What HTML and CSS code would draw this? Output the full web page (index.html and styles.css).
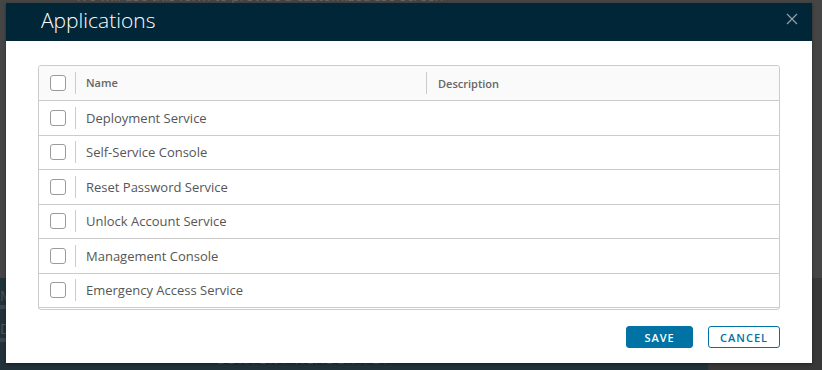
FILE: index.html
```html
<!DOCTYPE html>
<html lang="en">
<head>
    <meta charset="UTF-8">
    <meta name="viewport" content="width=device-width, initial-scale=1.0">
    <title>Applications</title>
    <link rel="stylesheet" href="styles.css">
</head>
<body>
    <div class="page">
        <div class="page-top">
            <p class="page-intro">We will use this form to provide a customized sso screen</p>
        </div>
        <div class="page-bottom">
            <div class="page-nav">
                <div class="nav-item">M</div>
                <div class="nav-item">D</div>
                <div class="content-title">Content Header Top</div>
            </div>
            <div class="page-side"></div>
        </div>
    </div>

    <div class="modal">
        <div class="modal-header">
            <h3 class="modal-title">Applications</h3>
            <button class="close" aria-label="Close">
                <svg width="12" height="12" viewBox="0 0 12 12">
                    <path d="M1 1 L11 11 M11 1 L1 11" stroke="#8b9aa4" stroke-width="1.4" fill="none"/>
                </svg>
            </button>
        </div>

        <div class="modal-body">
            <div class="grid">
                <div class="grid-row grid-head">
                    <div class="cell-select"><span class="checkbox"></span></div>
                    <div class="cell-name">Name</div>
                    <div class="cell-desc">Description</div>
                </div>
                <div class="grid-row">
                    <div class="cell-select"><span class="checkbox"></span></div>
                    <div class="cell-name">Deployment Service</div>
                    <div class="cell-desc"></div>
                </div>
                <div class="grid-row">
                    <div class="cell-select"><span class="checkbox"></span></div>
                    <div class="cell-name">Self-Service Console</div>
                    <div class="cell-desc"></div>
                </div>
                <div class="grid-row">
                    <div class="cell-select"><span class="checkbox"></span></div>
                    <div class="cell-name">Reset Password Service</div>
                    <div class="cell-desc"></div>
                </div>
                <div class="grid-row">
                    <div class="cell-select"><span class="checkbox"></span></div>
                    <div class="cell-name">Unlock Account Service</div>
                    <div class="cell-desc"></div>
                </div>
                <div class="grid-row">
                    <div class="cell-select"><span class="checkbox"></span></div>
                    <div class="cell-name">Management Console</div>
                    <div class="cell-desc"></div>
                </div>
                <div class="grid-row">
                    <div class="cell-select"><span class="checkbox"></span></div>
                    <div class="cell-name">Emergency Access Service</div>
                    <div class="cell-desc"></div>
                </div>
            </div>
        </div>

        <div class="modal-footer">
            <button class="btn btn-primary">Save</button>
            <button class="btn btn-outline">Cancel</button>
        </div>
    </div>
</body>
</html>
```

FILE: styles.css
```css
* {
    box-sizing: border-box;
}
body {
    margin: 0;
    font-family: "Open Sans", sans-serif;
    background: #3c3c3c;
    overflow: hidden;
}

/* dimmed page behind the modal */
.page {
    height: 100vh;
    display: flex;
    flex-direction: column;
}
.page-top {
    height: 278px;
    background: #454545;
    overflow: hidden;
}
.page-intro {
    margin: -11px 0 0 75px;
    font-size: 14px;
    line-height: 14px;
    color: #666;
}
.page-bottom {
    flex: 1;
    display: flex;
}
.page-nav {
    width: 708px;
    background: #22323a;
    padding-top: 4px;
}
.nav-item {
    height: 27px;
    line-height: 27px;
    border-bottom: 4px solid #3a464b;
    margin-bottom: 6px;
    font-size: 14px;
    color: #47555b;
}
.content-title {
    margin: 8px 0 0 216px;
    font-size: 13px;
    line-height: 18px;
    letter-spacing: 2px;
    text-transform: uppercase;
    color: #4b5a60;
}
.page-side {
    flex: 1;
    background: #383838;
}

/* modal */
.modal {
    position: absolute;
    top: 3px;
    left: 6px;
    width: 806px;
    height: 360px;
    background: #fff;
    display: flex;
    flex-direction: column;
    box-shadow: 0 1px 3px rgba(0,0,0,0.4);
}
.modal-header {
    height: 38px;
    background: #012638;
    display: flex;
    justify-content: space-between;
    align-items: flex-start;
    padding: 0 14px 0 35px;
}
.modal-title {
    margin: 0;
    font-size: 21px;
    font-weight: 300;
    line-height: 34px;
    color: #fff;
}
.close {
    background: none;
    border: none;
    padding: 0;
    margin-top: 10px;
    width: 12px;
    height: 12px;
    cursor: pointer;
}
.close svg {
    display: block;
}
.modal-body {
    padding: 24px 32px 0;
}

/* datagrid */
.grid {
    border: 1px solid #ccc;
    border-radius: 3px;
    padding-bottom: 1px;
}
.grid-row {
    display: flex;
    align-items: center;
    height: 34.5px;
    border-bottom: 1px solid #ccc;
    font-size: 13px;
    color: #565656;
}
.grid-head {
    height: 35px;
    background: #fafafa;
    border-radius: 3px 3px 0 0;
    font-size: 11px;
    font-weight: 600;
    color: #666;
}
.cell-select {
    width: 37px;
    height: 22px;
    padding-left: 11px;
    display: flex;
    align-items: center;
    border-right: 1px solid #ccc;
}
.checkbox {
    width: 16px;
    height: 16px;
    border: 1px solid #9a9a9a;
    border-radius: 3px;
    background: #fff;
}
.cell-name {
    width: 351px;
    padding-left: 10px;
}
.grid-head .cell-name {
    height: 22px;
    line-height: 22px;
    border-right: 1px solid #ccc;
}
.cell-desc {
    flex: 1;
    padding-left: 11px;
}

/* footer */
.modal-footer {
    display: flex;
    justify-content: flex-end;
    gap: 15px;
    padding: 16px 32px 15px;
}
.btn {
    height: 22px;
    min-width: 67px;
    padding: 0 11px;
    border-radius: 3px;
    font-family: "Open Sans", sans-serif;
    font-size: 11px;
    font-weight: 600;
    letter-spacing: 1px;
    text-transform: uppercase;
    cursor: pointer;
}
.btn-primary {
    background: #0072a3;
    border: 1px solid #0072a3;
    color: #fff;
}
.btn-outline {
    background: #fff;
    border: 1px solid #0072a3;
    color: #0072a3;
}
```
